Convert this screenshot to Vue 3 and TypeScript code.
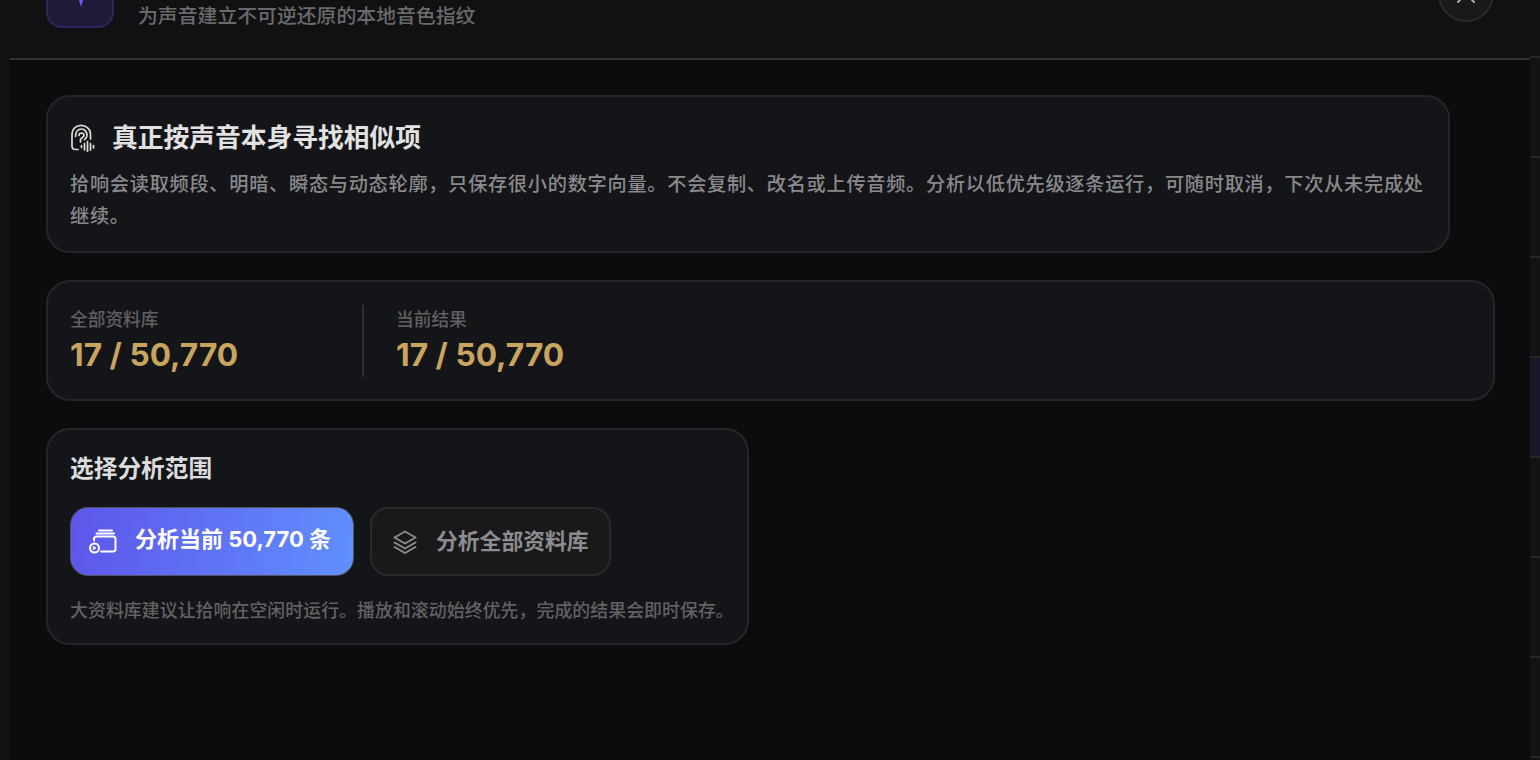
<script setup lang="ts">
const stats = [
  { label: '全部资料库', value: '17 / 50,770' },
  { label: '当前结果', value: '17 / 50,770' },
]
const sideRows = [0, 1, 2, 3, 4, 5, 6, 7]
</script>

<template>
  <div class="page">
    <div class="left-strip"></div>
    <main class="panel">
      <header class="head">
        <div class="logo">
          <svg class="logo-mark" width="10" height="12" viewBox="0 0 10 12"><path d="M1.500 0h7L5 12z" fill="#6a58f0" /></svg>
        </div>
        <p class="subtitle">为声音建立不可逆还原的本地音色指纹</p>
        <button class="close" aria-label="关闭">
          <svg width="20" height="20" viewBox="0 0 20 20" fill="none" stroke="#b5b5b8" stroke-width="1.800" stroke-linecap="round"><path d="M2 2l16 16M18 2L2 18" /></svg>
        </button>
      </header>
      <div class="body">
        <section class="card intro">
          <h2 class="intro-title">
            <svg class="ear" width="26" height="28" viewBox="0 0 26 28" fill="none" stroke="#dcdcdc" stroke-width="1.700" stroke-linecap="round" stroke-linejoin="round">
              <path d="M8 25.500H5.500C3.300 25.500 2 24 2 22V10C2 5 6 1.300 11 1.300C16 1.300 20.500 5 20.500 10V15" />
              <path d="M5.500 12.500C5.500 7.800 8 5 11.500 5C14.500 5 17 7.800 17 11.500C17 13 16 14.500 14.500 15.500" />
              <path d="M9 11.500C9 10 10 9 11.500 9C13 9 14 10 14 11.500C14 13 11.500 13.500 10.500 15.500V18" />
              <path d="M11.500 21.500v2M14.500 19.500v6.500M17.500 17.500v10M20.500 19.500v6.500M23.500 21.500v2.500" />
            </svg>
            真正按声音本身寻找相似项
          </h2>
          <p class="intro-text">拾响会读取频段、明暗、瞬态与动态轮廓，只保存很小的数字向量。不会复制、改名或上传音频。分析以低优先级逐条运行，可随时取消，下次从未完成处继续。</p>
        </section>

        <section class="card stats">
          <div v-for="s in stats" :key="s.label" class="stat">
            <div class="stat-label">{{ s.label }}</div>
            <div class="stat-value">{{ s.value }}</div>
          </div>
        </section>

        <section class="card scope">
          <h3 class="scope-title">选择分析范围</h3>
          <div class="actions">
            <button class="btn primary">
              <svg width="30" height="28" viewBox="0 0 30 28" fill="none" stroke="#fff" stroke-width="2" stroke-linecap="round" stroke-linejoin="round">
                <path d="M10 2.500H23M7.500 5.500H25" />
                <path d="M5 12.500V11C5 9.500 6 8.500 7.500 8.500H24C25.500 8.500 26.500 9.500 26.500 11V21C26.500 22.500 25.500 23.500 24 23.500H12" />
                <circle cx="5.500" cy="20" r="4.500" />
                <path d="M4.500 18.500l2.500 1.500-2.500 1.500z" fill="#fff" stroke-width="0.800" />
              </svg>
              <span class="btn-label">分析当前 50,770 条</span>
            </button>
            <button class="btn ghost">
              <svg width="26" height="26" viewBox="0 0 26 26" fill="none" stroke="#8d8d8f" stroke-width="2" stroke-linecap="round" stroke-linejoin="round">
                <path d="M13 2.500L23.500 8.500 13 14.500 2.500 8.500z" />
                <path d="M2.500 13.500L13 19.500l10.500-6" />
                <path d="M2.500 18L13 24l10.500-6" />
              </svg>
              <span class="btn-label">分析全部资料库</span>
            </button>
          </div>
          <p class="hint">大资料库建议让拾响在空闲时运行。播放和滚动始终优先，完成的结果会即时保存。</p>
        </section>
      </div>
    </main>
    <aside class="right-strip">
      <div v-for="r in sideRows" :key="r" class="side-row" :class="{ active: r === 3 }"></div>
    </aside>
  </div>
</template>

<style scoped>
.page {
  display: flex;
  width: 1540px;
  height: 760px;
  overflow: hidden;
  background: #0f0f11;
  font-family: Inter, "Noto Sans CJK SC", sans-serif;
}
.left-strip {
  width: 10px;
  flex: none;
  background: #111113;
}
.panel {
  width: 1520px;
  flex: none;
  display: flex;
  flex-direction: column;
  background: #0b0c0e;
}
.head {
  height: 60px;
  flex: none;
  box-sizing: border-box;
  display: flex;
  align-items: flex-start;
  padding: 0 36px;
  overflow: hidden;
  background: #111113;
  border-bottom: 2px solid #333335;
}
.logo {
  width: 68px;
  height: 68px;
  flex: none;
  margin-top: -40px;
  box-sizing: border-box;
  display: flex;
  align-items: flex-end;
  justify-content: center;
  padding: 0 0 19px 2px;
  border: 2px solid #2a2760;
  border-radius: 16px;
  background: #1d1b38;
}
.subtitle {
  margin: 3px 0 0 24px;
  font-size: 19.850px;
  line-height: 26px;
  font-weight: 500;
  color: #6a6a6c;
}
.close {
  width: 56px;
  height: 56px;
  margin: -34px 0 0 auto;
  flex: none;
  padding: 0;
  display: flex;
  align-items: center;
  justify-content: center;
  border: 2px solid #2b2b2f;
  border-radius: 50%;
  background: #19191c;
}
.body {
  flex: 1;
  display: flex;
  flex-direction: column;
  align-items: flex-start;
  padding: 35px 36px 0;
}
.card {
  box-sizing: border-box;
  border: 2px solid #26262a;
  border-radius: 24px;
  background: #141519;
}
.intro {
  width: 1404px;
  height: 158px;
  padding: 25px 22px 0;
}
.intro-title {
  display: flex;
  align-items: center;
  gap: 16px;
  margin: 0;
  font-size: 25.750px;
  line-height: 32px;
  font-weight: 700;
  color: #e2e2e2;
}
.ear {
  flex: none;
}
.intro-text {
  margin: 14px 0 0;
  font-size: 19.200px;
  letter-spacing: 0.720px;
  line-height: 32px;
  font-weight: 500;
  color: #8a8a8c;
}
.stats {
  width: 1449px;
  height: 121px;
  margin-top: 27px;
  padding: 23px 22px 22px;
  display: flex;
}
.stat {
  width: 292px;
}
.stat + .stat {
  border-left: 2px solid #2f2f32;
  padding-left: 32px;
}
.stat-label {
  margin-top: 3px;
  font-size: 17.700px;
  line-height: 24px;
  font-weight: 500;
  color: #606062;
}
.stat-value {
  margin-top: 4px;
  font-size: 31.700px;
  line-height: 38px;
  font-weight: 700;
  color: #c9a45f;
}
.scope {
  width: 703px;
  height: 217px;
  margin-top: 27px;
  padding: 23px 22px 0;
}
.scope-title {
  margin: 0;
  font-size: 23.700px;
  line-height: 32px;
  font-weight: 700;
  color: #dcdcdc;
}
.actions {
  display: flex;
  align-items: center;
  gap: 16px;
  margin-top: 22px;
}
.btn {
  height: 69px;
  box-sizing: border-box;
  display: flex;
  align-items: center;
  gap: 16px;
  border-radius: 18px;
  font-family: inherit;
  font-weight: 700;
  white-space: nowrap;
}
.primary {
  width: 284px;
  padding: 0 0 0 18px;
  border: 1px solid #55555f;
  background: linear-gradient(100deg, #5e55ea, #6090ff);
  color: #fff;
  font-size: 22px;
}
.primary .btn-label {
  padding-bottom: 10px;
}
.ghost {
  width: 241px;
  padding: 0 0 0 20px;
  border: 2px solid #2a2a2d;
  background: #19191c;
  color: #8d8d8f;
  font-size: 21.800px;
  gap: 18px;
}
.ghost .btn-label {
  padding-bottom: 4px;
}
.hint {
  margin: 23px 0 0;
  font-size: 17.900px;
  letter-spacing: 0.050px;
  line-height: 24px;
  font-weight: 500;
  white-space: nowrap;
  color: #626264;
}
.right-strip {
  width: 10px;
  flex: none;
  padding-top: 56px;
  background: #131314;
}
.side-row {
  height: 98px;
  border-top: 2px solid #252527;
}
.side-row.active {
  background: #17162a;
}
</style>
